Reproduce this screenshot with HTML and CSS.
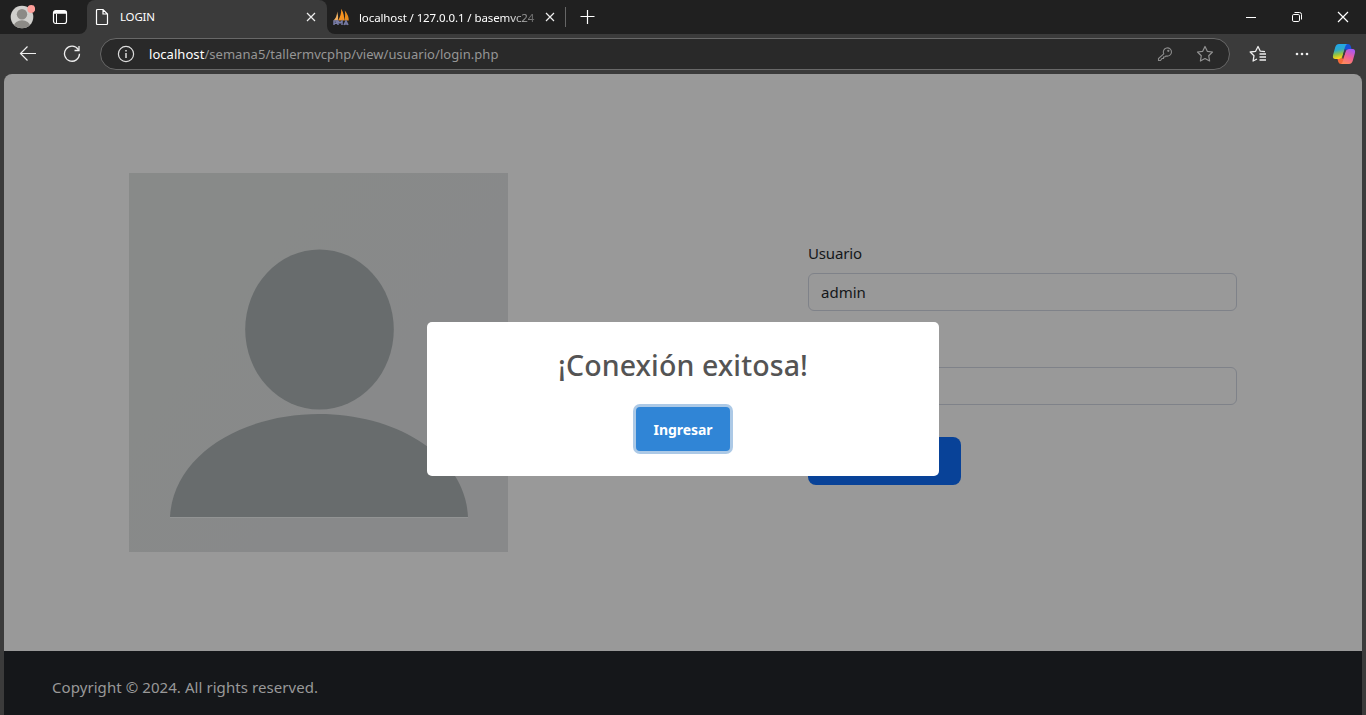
FILE: index.html
```html
<!DOCTYPE html>
<html lang="es">
<head>
<meta charset="utf-8">
<title>LOGIN</title>
<link rel="stylesheet" href="styles.css">
</head>
<body>
<div class="window">
  <header class="tabbar">
    <div class="tabbar-start">
      <svg class="profile" width="26" height="26" viewBox="0 0 26 26"><defs><clipPath id="pc"><circle cx="13" cy="13" r="11.3"/></clipPath></defs><circle cx="13" cy="13" r="11.3" fill="#d0cfcc"/><g clip-path="url(#pc)" fill="#8c8a86"><circle cx="13" cy="10.3" r="5.2"/><ellipse cx="13" cy="22" rx="8" ry="5.8"/></g><circle cx="22.3" cy="5" r="3.9" fill="#ff9f9a"/></svg>
      <svg class="workspace" width="16" height="16" viewBox="0 0 16 16" fill="none" stroke="#fff"><rect x="1.5" y="1.5" width="13" height="13" rx="2.2" stroke-width="1.2"/><path d="M2 2.800h12M2 4h12" stroke-width="1.400"/><path d="M4.500 5v9" stroke-width="1"/></svg>
    </div>
    <div class="tab active">
      <svg width="14" height="18" viewBox="0 0 14 18" fill="none" stroke="#fff" stroke-width="1.2"><path d="M1.500 2.500q0-1 1-1h5.500l4.500 4.500v9.500q0 1-1 1h-9q-1 0-1-1zM8 1.500V6h4.500"/></svg>
      <span class="tab-title first">LOGIN</span>
      <svg class="close" width="10" height="10" viewBox="0 0 10 10" stroke="#eee" stroke-width="1.2"><path d="M1 1l8 8M9 1L1 9"/></svg>
    </div>
    <div class="tab">
      <svg width="18" height="18" viewBox="0 0 18 18"><path d="M1.500 12.500Q5 9 5.200 3.500q1.500 5 .8 9z" fill="#f2b060"/><path d="M6 12.500Q9.500 7 9.200.8q3.500 6 2.800 11.700z" fill="#f79320"/><path d="M12 12.500q1.800-4 .8-10 4 5 4 10z" fill="#e88b1c"/><path d="M2 17v-4h2.500v2.300H2M6 17v-4l2 2 2-2v4M12 17l2-4 2 4M12.500 16h3" fill="none" stroke="#777ba5" stroke-width="1.500"/></svg>
      <span class="tab-title second">localhost / 127.0.0.1 / basemvc24</span>
      <svg class="close" width="10" height="10" viewBox="0 0 10 10" stroke="#eee" stroke-width="1.2"><path d="M1 1l8 8M9 1L1 9"/></svg>
    </div>
    <svg class="plus" width="16" height="16" viewBox="0 0 16 16" stroke="#fff"><path d="M7.500 1v14M.5 7.500h14" stroke-width="1.200"/></svg>
    <div class="controls">
      <svg width="12" height="12" viewBox="0 0 12 12" stroke="#fff"><path d="M1 6.500h10"/></svg>
      <svg width="12" height="12" viewBox="0 0 12 12" fill="none" stroke="#fff"><rect x="1.500" y="3.500" width="7" height="7" rx="1.300"/><path d="M3.500 1.500h5q2 0 2 2v5"/></svg>
      <svg width="12" height="12" viewBox="0 0 12 12" stroke="#fff" stroke-width="1.200"><path d="M1 1l10 10M11 1L1 11"/></svg>
    </div>
  </header>
  <nav class="toolbar">
    <svg class="back" width="18" height="18" viewBox="0 0 18 18" fill="none" stroke="#eee" stroke-width="1.200"><path d="M17 8.500H1.500M8.500 1.500l-7 7 7 7"/></svg>
    <svg class="reload" width="18" height="18" viewBox="0 0 18 18" fill="none" stroke="#eee" stroke-width="1.300"><path d="M15.200 4.500A7.500 7.500 0 1 0 16.500 8.800M16 1v4.500h-4.500"/></svg>
    <div class="address">
      <svg width="18" height="18" viewBox="0 0 18 18" fill="none" stroke="#ddd" stroke-width="1.200"><circle cx="9" cy="9" r="7.600"/><path d="M9 8v5M9 5v1.500" stroke-width="1.500"/></svg>
      <span class="url"><b>localhost</b>/semana5/tallermvcphp/view/usuario/login.php</span>
      <svg class="key" width="16" height="16" viewBox="0 0 16 16" fill="none" stroke="#8b8b8b" stroke-width="1.100"><path d="M6.700 7.800A4.100 4.100 0 1 1 9.100 9.900L7.800 11H6.500v1.500H5L3.500 14.500H1.500v-2z"/><circle cx="11.300" cy="4.800" r=".6"/></svg>
      <svg width="18" height="18" viewBox="0 0 18 18" fill="none" stroke="#929292" stroke-width="1.200" stroke-linejoin="round"><path d="M9 1.500l2.300 4.800 5.200.7-3.800 3.700.9 5.300L9 13.500 4.400 16l.9-5.300L1.500 7l5.200-.7z"/></svg>
    </div>
    <svg class="favorites" width="18" height="18" viewBox="0 0 18 18" fill="none" stroke="#eee" stroke-width="1.300" stroke-linejoin="round"><path d="M16 6.700l-4.700-.5L9 1.500 6.600 6.300 1.200 7 5 10.700 4.100 16 8 14M10.500 9H17M10.500 12H17M10.500 15H17"/></svg>
    <svg class="more" width="14" height="4" viewBox="0 0 14 4" fill="#eee"><circle cx="2" cy="2" r="1.300"/><circle cx="7" cy="2" r="1.300"/><circle cx="12" cy="2" r="1.300"/></svg>
    <svg class="copilot" width="24" height="22" viewBox="0 0 24 22"><defs><linearGradient id="ca" x2=".2" y2="1"><stop stop-color="#1ba5f5"/><stop offset=".45" stop-color="#2fa9c6"/><stop offset=".75" stop-color="#9bc63b"/><stop offset="1" stop-color="#ffd31a"/></linearGradient><linearGradient id="cb" x1=".7" x2=".3" y2="1"><stop stop-color="#a558f5"/><stop offset=".5" stop-color="#ee5f9a"/><stop offset="1" stop-color="#ff8a5b"/></linearGradient></defs><path d="M12 1h4q2 0 2.700 2l1 3.500H15L11 10z" fill="#1750d7"/><path d="M12 21H9q-2 0-2.700-2l-1-3.500H9l4-4z" fill="#f46a3a"/><path d="M7 1h8q-1.500 1-2.300 4l-2 7.500Q10 16 6.700 16H3.500Q0 16 1.200 11.500L3.300 4Q4.300 1 7 1z" fill="url(#ca)"/><path d="M17 21H9q1.500-1 2.300-4l2-7.500Q14 6 17.300 6h3.200Q24 6 22.800 10.500L20.700 18Q19.700 21 17 21z" fill="url(#cb)"/><path d="M13.300 6.500l-2.600 9" stroke="#3b3b3b" stroke-width="1.300"/></svg>
  </nav>
  <div class="page">
    <main class="content">
      <svg class="avatar" width="379" height="379" viewBox="0 0 379 379"><defs><linearGradient id="bg" x1="0" y1=".2" x2=".8" y2=".8"><stop offset=".3" stop-color="#888a89"/><stop offset=".75" stop-color="#88898a"/></linearGradient></defs><rect width="379" height="379" fill="url(#bg)"/><ellipse cx="190.500" cy="156.500" rx="74.300" ry="80" fill="#686c6d"/><path d="M41 344C44 282 113 241 190 241S336 282 339 344z" fill="#686c6d"/><path d="M41 344.500H339" stroke="#929494"/></svg>
      <form class="login">
        <label>Usuario</label>
        <div class="field">admin</div>
        <div class="field password"></div>
        <div class="submit"></div>
      </form>
    </main>
    <footer><span class="copyright">Copyright © 2024. All rights reserved.</span></footer>
  </div>
  <div class="modal">
    <h2><span class="modal-title">¡Conexión exitosa!</span></h2>
    <div class="confirm"><span>Ingresar</span></div>
  </div>
</div>
</body>
</html>
```

FILE: styles.css
```css
* { box-sizing: border-box; }
body { margin: 0; font-family: "Noto Sans", "Open Sans", sans-serif; }
svg { display: block; flex: none; }
.window { position: relative; width: 1366px; height: 715px; overflow: hidden; background: #3b3b3b; display: flex; flex-direction: column; }
.tabbar { height: 34px; background: #3b3b3b; display: flex; flex: none; }
.tabbar-start { width: 87px; background: #202020; display: flex; align-items: center; padding-left: 9px; gap: 17px; border-bottom-right-radius: 8px; }
.tab { width: 239px; display: flex; align-items: center; background: #202020; color: #fff; padding-left: 5px; border-bottom-left-radius: 8px; }
.tab.active { width: 240px; background: #3b3b3b; padding-left: 8px; box-shadow: 0 -10px 0 #202020; border-radius: 8px 8px 0 0; }
.tab-title { white-space: nowrap; }
.first { margin-left: 11px; font-size: 11.5px; letter-spacing: -.2px; position: relative; top: -1px; }
.second { margin-left: 9px; width: 177px; overflow: hidden; font-size: 11.5px; letter-spacing: -.1px; -webkit-mask-image: linear-gradient(to right, #000 82%, #0004 100%); mask-image: linear-gradient(to right, #000 82%, #0004 100%); }
.close { margin-left: auto; margin-right: 11px; }
.tab:not(.active) .close { margin-right: 10px; }
.tab:not(.active)::after { content: ""; width: 1px; height: 20px; background: #666; }
.plus { box-sizing: content-box; background: #202020; padding: 9px 0 9px 14px; }
.controls { background: #202020; flex: 1; display: flex; justify-content: flex-end; align-items: center; gap: 34px; padding-right: 17px; }
.toolbar { height: 40px; flex: none; display: flex; align-items: center; padding: 0 10px 0 19px; }
.reload { margin-left: 26px; }
.address { margin-left: 19px; width: 1130px; height: 32px; border: 1px solid #686868; border-radius: 16px; background: #292929; display: flex; align-items: center; padding: 0 15px 0 16px; }
.url { color: #969696; font-size: 13px; letter-spacing: .05px; margin-left: 14px; white-space: nowrap; }
.url b { font-weight: 400; color: #fff; }
.key { margin-left: auto; margin-right: 23px; }
.favorites { margin-left: 19px; }
.more { margin-left: 28px; }
.copilot { margin-left: auto; }
.page { margin: 0 4px; flex: 1; display: flex; flex-direction: column; background: #999; border-radius: 8px 8px 0 0; overflow: hidden; }
.content { height: 577px; display: flex; align-items: flex-start; padding: 99px 125px 0; }
.login { margin-left: 300px; margin-top: 69px; width: 429px; color: #141719; font-size: 15px; }
.login label { display: block; height: 31px; line-height: 22px; letter-spacing: -.15px; }
.field { height: 38px; border: 1px solid #7f8289; border-radius: 6px; padding-left: 12px; line-height: 37px; letter-spacing: 0; }
.password { margin-top: 56px; }
.submit { width: 153px; height: 48px; margin-top: 32px; border-radius: 8px; background: #084298; }
footer { flex: 1; background: #15171a; color: #999; font-size: 15px; padding: 24px 48px 0; line-height: 25px; }
.copyright { letter-spacing: .07px; }
.modal { position: absolute; left: 427px; top: 322px; width: 512px; height: 154px; border-radius: 5px; background: #fff; display: flex; flex-direction: column; align-items: center; }
.modal h2 { margin: 23px 0 0; height: 62px; line-height: 41px; font-size: 28.5px; font-weight: 500; letter-spacing: .1px; color: #545454; white-space: nowrap; }
.confirm { width: 94px; height: 44px; border-radius: 4px; background: #3085d6; box-shadow: 0 0 0 3px #acc9e6; color: #fff; font-weight: 700; font-size: 14px; line-height: 45px; text-align: center; letter-spacing: -.05px; }
```
